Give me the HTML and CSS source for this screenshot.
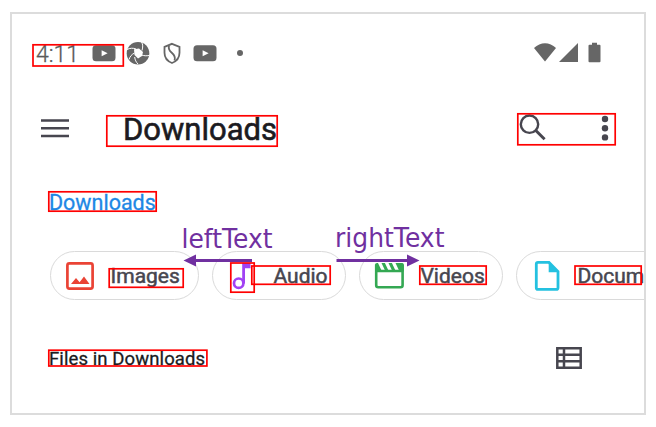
FILE: index.html
```html
<!DOCTYPE html>
<html lang="en">
<head>
<meta charset="utf-8">
<title>Downloads</title>
<link rel="stylesheet" href="styles.css">
</head>
<body>
<main class="screen">
  <header class="status">
    <span class="time">4:11</span>
    <svg class="video-app" width="24" height="24" viewBox="0 0 24 24"><rect x=".5" y="4.300" width="23" height="16" rx="3.5" fill="#666"/><path d="M9.6 9.300v6l6-3z" fill="#fff"/></svg>
    <svg class="shutter" width="24" height="24" viewBox="0 0 24 24"><circle cx="12" cy="12.300" r="11.300" fill="#666"/><path d="M8 8.300l5-.8 4 3.500-1 4-4 2.500-3.500-3.500z" fill="#fff"/><path d="M1 8.500C4 7 7 6.800 10 8M15.500 1c1.500 2.500 1.500 5 .5 8.500M23 14.500c-2.500.5-5 .3-7.500-.5M12 23c-2-2-3-4-3.300-7M3 18.500c1-3 2.500-5 5.500-6.500" fill="none" stroke="#fff" stroke-width="1"/></svg>
    <svg class="shield" width="20" height="24" viewBox="0 0 20 24"><path d="M10 2.800l7.500 3v6c0 4.500-3 8.500-7.500 10.200-4.500-1.700-7.500-5.700-7.500-10.200v-6z" fill="none" stroke="#666" stroke-width="1.800"/><path d="M7 4.800c-.8 3 .2 4.800 2.500 6.700s4.500 4 3 8" fill="none" stroke="#666" stroke-width="1.800"/></svg>
    <svg class="video-app second" width="24" height="24" viewBox="0 0 24 24"><rect x=".5" y="4.300" width="23" height="16" rx="3.500" fill="#666"/><path d="M9.600 9.300v6l6-3z" fill="#fff"/></svg>
    <span class="dot"></span>
    <svg class="signals" width="70" height="24" viewBox="0 0 70 24"><g fill="#666"><path d="M1 6.900C7.500.6 16.500.6 23 6.900L12 20.500z"/><path d="M26 21L45 2v19z"/><path d="M59 1.800h5v2h2.500q1 0 1 1v15.500q0 1-1 1h-10q-1 0-1-1V4.800q0-1 1-1H59z"/></g></svg>
  </header>

  <nav class="appbar">
    <svg width="28" height="20" viewBox="0 0 28 20"><path d="M0 2.500h28M0 10.300h28M0 18h28" stroke="#47464f" stroke-width="2.600"/></svg>
    <h1>Downloads</h1>
    <svg class="search" width="28" height="28" viewBox="0 0 28 28"><circle cx="10.500" cy="10.200" r="8.700" fill="none" stroke="#47464f" stroke-width="2.400"/><path d="M16.800 16.500l8.800 8.700" stroke="#47464f" stroke-width="3"/></svg>
    <svg class="more" width="8" height="28" viewBox="0 0 8 28"><g fill="#47464f"><circle cx="4" cy="5" r="3.200"/><circle cx="4" cy="14.200" r="3.200"/><circle cx="4" cy="23.400" r="3.200"/></g></svg>
  </nav>

  <div class="breadcrumb">Downloads</div>

  <section class="chips">
    <div class="chip images">
      <svg width="32" height="32" viewBox="0 0 32 32"><rect x="3.400" y="3.400" width="25.200" height="25.200" rx="2" fill="none" stroke="#ea4335" stroke-width="2.700"/><path d="M7 24l5-6 3.600 4.200L20 16.500l5.500 7.500z" fill="#ea4335"/></svg>
      <span>Images</span>
    </div>
    <div class="chip audio">
      <svg width="32" height="32" viewBox="0 0 32 32"><circle cx="12.700" cy="23.200" r="4.700" fill="none" stroke="#a142f4" stroke-width="2.700"/><path d="M16.200 23.500V3h8.300v5.200H19v15.300z" fill="#a142f4"/></svg>
      <span>Audio</span>
    </div>
    <div class="chip videos">
      <svg width="32" height="32" viewBox="0 0 32 32"><path d="M3.200 4.500v20.800q0 2 2 2h22.400q2 0 2-2V4.500M3 11h26" fill="none" stroke="#34a853" stroke-width="2.600"/><path d="M2 5q0-2 2-2h1l4 8.500H2zM8.500 3h3.400l4 8.500h-3.400zM15.500 3h3.400l4 8.500h-3.400zM22.500 3h6.800q1.500 0 1.500 2v6.500h-4.300z" fill="#34a853"/></svg>
      <span>Videos</span>
    </div>
    <div class="chip documents">
      <svg width="32" height="32" viewBox="0 0 32 32"><path d="M6 2.400h11L26 11.500v16.200q0 1.700-1.700 1.700H6q-1.700 0-1.700-1.700V4.100q0-1.700 1.700-1.700z" fill="none" stroke="#24c1e0" stroke-width="2.800"/><path d="M16.700 2v10.200H27z" fill="#24c1e0"/></svg>
      <span>Docum</span>
    </div>
  </section>

  <div class="files">
    <h2>Files in Downloads</h2>
    <svg width="26" height="22" viewBox="0 0 26 22"><path d="M1.300 1.300h23.400v19.400H1.300zM8 1v20M1 7.700h24M1 14.200h24" fill="none" stroke="#47464f" stroke-width="2.500"/></svg>
  </div>
</main>

<!-- Annotation layer: element bounds and text direction arrows -->
<svg class="notes" width="656" height="427" viewBox="0 0 656 427">
  <g class="bounds">
    <rect x="33" y="44.800" width="90.300" height="21.200"/>
    <rect x="106.800" y="115.800" width="170.400" height="30.400"/>
    <rect x="517.800" y="113.800" width="97.400" height="31"/>
    <rect x="48.800" y="191.800" width="107.400" height="19.400"/>
    <rect x="109.200" y="268.800" width="74" height="18.500"/>
    <rect x="230.800" y="263" width="23.400" height="29.200"/>
    <rect x="251.800" y="266" width="78.400" height="18.300"/>
    <rect x="419.800" y="266" width="66.400" height="18.300"/>
    <rect x="575" y="266" width="66.200" height="18.300"/>
    <rect x="48.800" y="350.200" width="158.100" height="15.800"/>
  </g>
  <g class="arrows">
    <path d="M183.500 260.500l12.500-6v4.500h56v3h-56v4.500z"/>
    <path d="M419.500 260.500l-12.500-6v4.500h-70.500v3H407v4.500z"/>
    <text x="181.500" y="248" textLength="91" lengthAdjust="spacingAndGlyphs">leftText</text>
    <text x="335" y="247.300" textLength="109.500" lengthAdjust="spacingAndGlyphs">rightText</text>
  </g>
</svg>
</body>
</html>
```

FILE: styles.css
```css
* { box-sizing: border-box; }

body {
  margin: 0;
  padding: 12px 0 0 10px;
  height: 427px;
  overflow: hidden;
  background: #fff;
  font-family: Roboto, "Liberation Sans", sans-serif;
  color: #1b1b21;
}

svg { display: block; flex: none; }

.screen {
  width: 636px;
  height: 403px;
  border: 2px solid #dcdcdc;
  overflow: hidden;
}

.status {
  display: flex;
  align-items: center;
  height: 30px;
  margin-top: 24px;
  padding: 0 41px 0 24px;
}

.time {
  width: 55.500px;
  padding-top: 3px;
  font-size: 23px;
  font-weight: 300;
  line-height: 30px;
  color: #555;
  -webkit-text-stroke: .3px #666;
  white-space: nowrap;
}

.shutter { margin-left: 10px; }
.shield { margin-left: 12px; }
.second { margin-left: 11.500px; }

.dot {
  width: 6px;
  height: 6px;
  margin-left: 19.500px;
  border-radius: 50%;
  background: #666;
}

.signals { margin-left: auto; }

.appbar {
  display: flex;
  align-items: center;
  height: 40px;
  margin-top: 40px;
  padding: 0 35px 0 29px;
}

h1 {
  margin: 0 0 0 54px;
  padding-top: 3px;
  font-size: 31px;
  font-weight: 400;
  line-height: 40px;
  -webkit-text-stroke: .6px #1b1b21;
}

.search { margin-left: auto; }
.more { margin-left: 54px; }

.breadcrumb {
  height: 28px;
  margin-top: 40px;
  padding: 1px 0 0 37px;
  font-size: 21.500px;
  line-height: 28px;
  color: #1e88e5;
  -webkit-text-stroke: .3px #1e88e5;
}

.chips {
  display: flex;
  gap: 12.500px;
  margin-top: 35px;
  padding-left: 37.500px;
}

.chip {
  display: flex;
  flex: none;
  align-items: center;
  height: 49px;
  padding-left: 13px;
  border: 1.500px solid #dadada;
  border-radius: 25px;
  font-size: 21px;
  font-weight: 400;
  color: #47464f;
  -webkit-text-stroke: .5px #47464f;
}

.chip span { margin-left: 16px; }
.images { width: 149.500px; }
.images span { margin-left: 15px; }
.audio { width: 134.500px; }
.videos { width: 144.500px; }
.documents { width: 190px; padding-left: 15px; }
.documents span { margin-left: 14px; }

.files {
  display: flex;
  align-items: center;
  justify-content: space-between;
  height: 24px;
  margin-top: 46px;
  padding: 0 62px 0 37px;
}

h2 {
  margin: 0;
  padding-top: 2px;
  font-size: 18.500px;
  font-weight: 400;
  line-height: 24px;
  letter-spacing: .1px;
  -webkit-text-stroke: .3px #1b1b21;
}

.notes {
  position: absolute;
  top: 0;
  left: 0;
}

.bounds rect {
  fill: none;
  stroke: #f00;
  stroke-width: 1.700px;
}

.arrows {
  fill: #7030a0;
  font-family: "DejaVu Sans", sans-serif;
  font-size: 26px;
}
```
